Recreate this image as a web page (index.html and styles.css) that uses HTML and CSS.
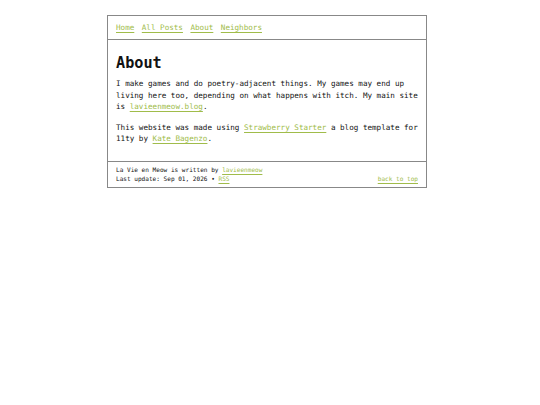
FILE: index.html
```html
<!DOCTYPE html>
<html>
<head>
<meta charset="utf-8">
<link rel="stylesheet" href="styles.css">
</head>
<body>
<div class="page">
  <nav class="nav">
    <a href="#">Home</a>
    <a href="#">All Posts</a>
    <a href="#">About</a>
    <a href="#">Neighbors</a>
  </nav>
  <main class="main">
    <h1 class="title">About</h1>
    <p class="para">I make games and do poetry-adjacent things. My games may end up living here too, depending on what happens with itch. My main site is <a href="#">lavieenmeow.blog</a>.</p>
    <p class="para">This website was made using <a href="#">Strawberry Starter</a> a blog template for 11ty by <a href="#">Kate Bagenzo</a>.</p>
  </main>
  <footer class="footer">
    <div class="foot-line">La Vie en Meow is written by <a href="#">lavieenmeow</a></div>
    <div class="foot-row">
      <span>Last update: Sep 01, 2026 • <a href="#">RSS</a></span>
      <a href="#">back to top</a>
    </div>
  </footer>
</div>
</body>
</html>
```
FILE: styles.css
```css
html, body {
  margin: 0;
  padding: 0;
  background: #fff;
}
body {
  font-family: "DejaVu Sans Mono", monospace;
  color: #111;
  font-size: 7.6px;
}
a {
  color: #a0bc4a;
  text-decoration: underline;
  text-decoration-thickness: 1px;
  text-underline-offset: 1.5px;
}
.page {
  width: 318px;
  margin: 15px 0 0 107px;
  border: 1px solid #888;
}
.nav {
  display: flex;
  gap: 7.5px;
  padding: 6px 8px;
  line-height: 11px;
  border-bottom: 1px solid #888;
}
.main {
  padding: 13px 8px 16px;
}
.title {
  font-size: 15.2px;
  font-weight: bold;
  margin: 0 0 5px;
  line-height: 20px;
}
.para {
  margin: 0 0 9px;
  line-height: 11.5px;
}
.para:last-child {
  margin-bottom: 0;
}
.footer {
  border-top: 1px solid #888;
  padding: 3px 8px 4px;
  font-size: 6.08px;
  line-height: 9px;
}
.foot-row {
  display: flex;
  justify-content: space-between;
}
```
